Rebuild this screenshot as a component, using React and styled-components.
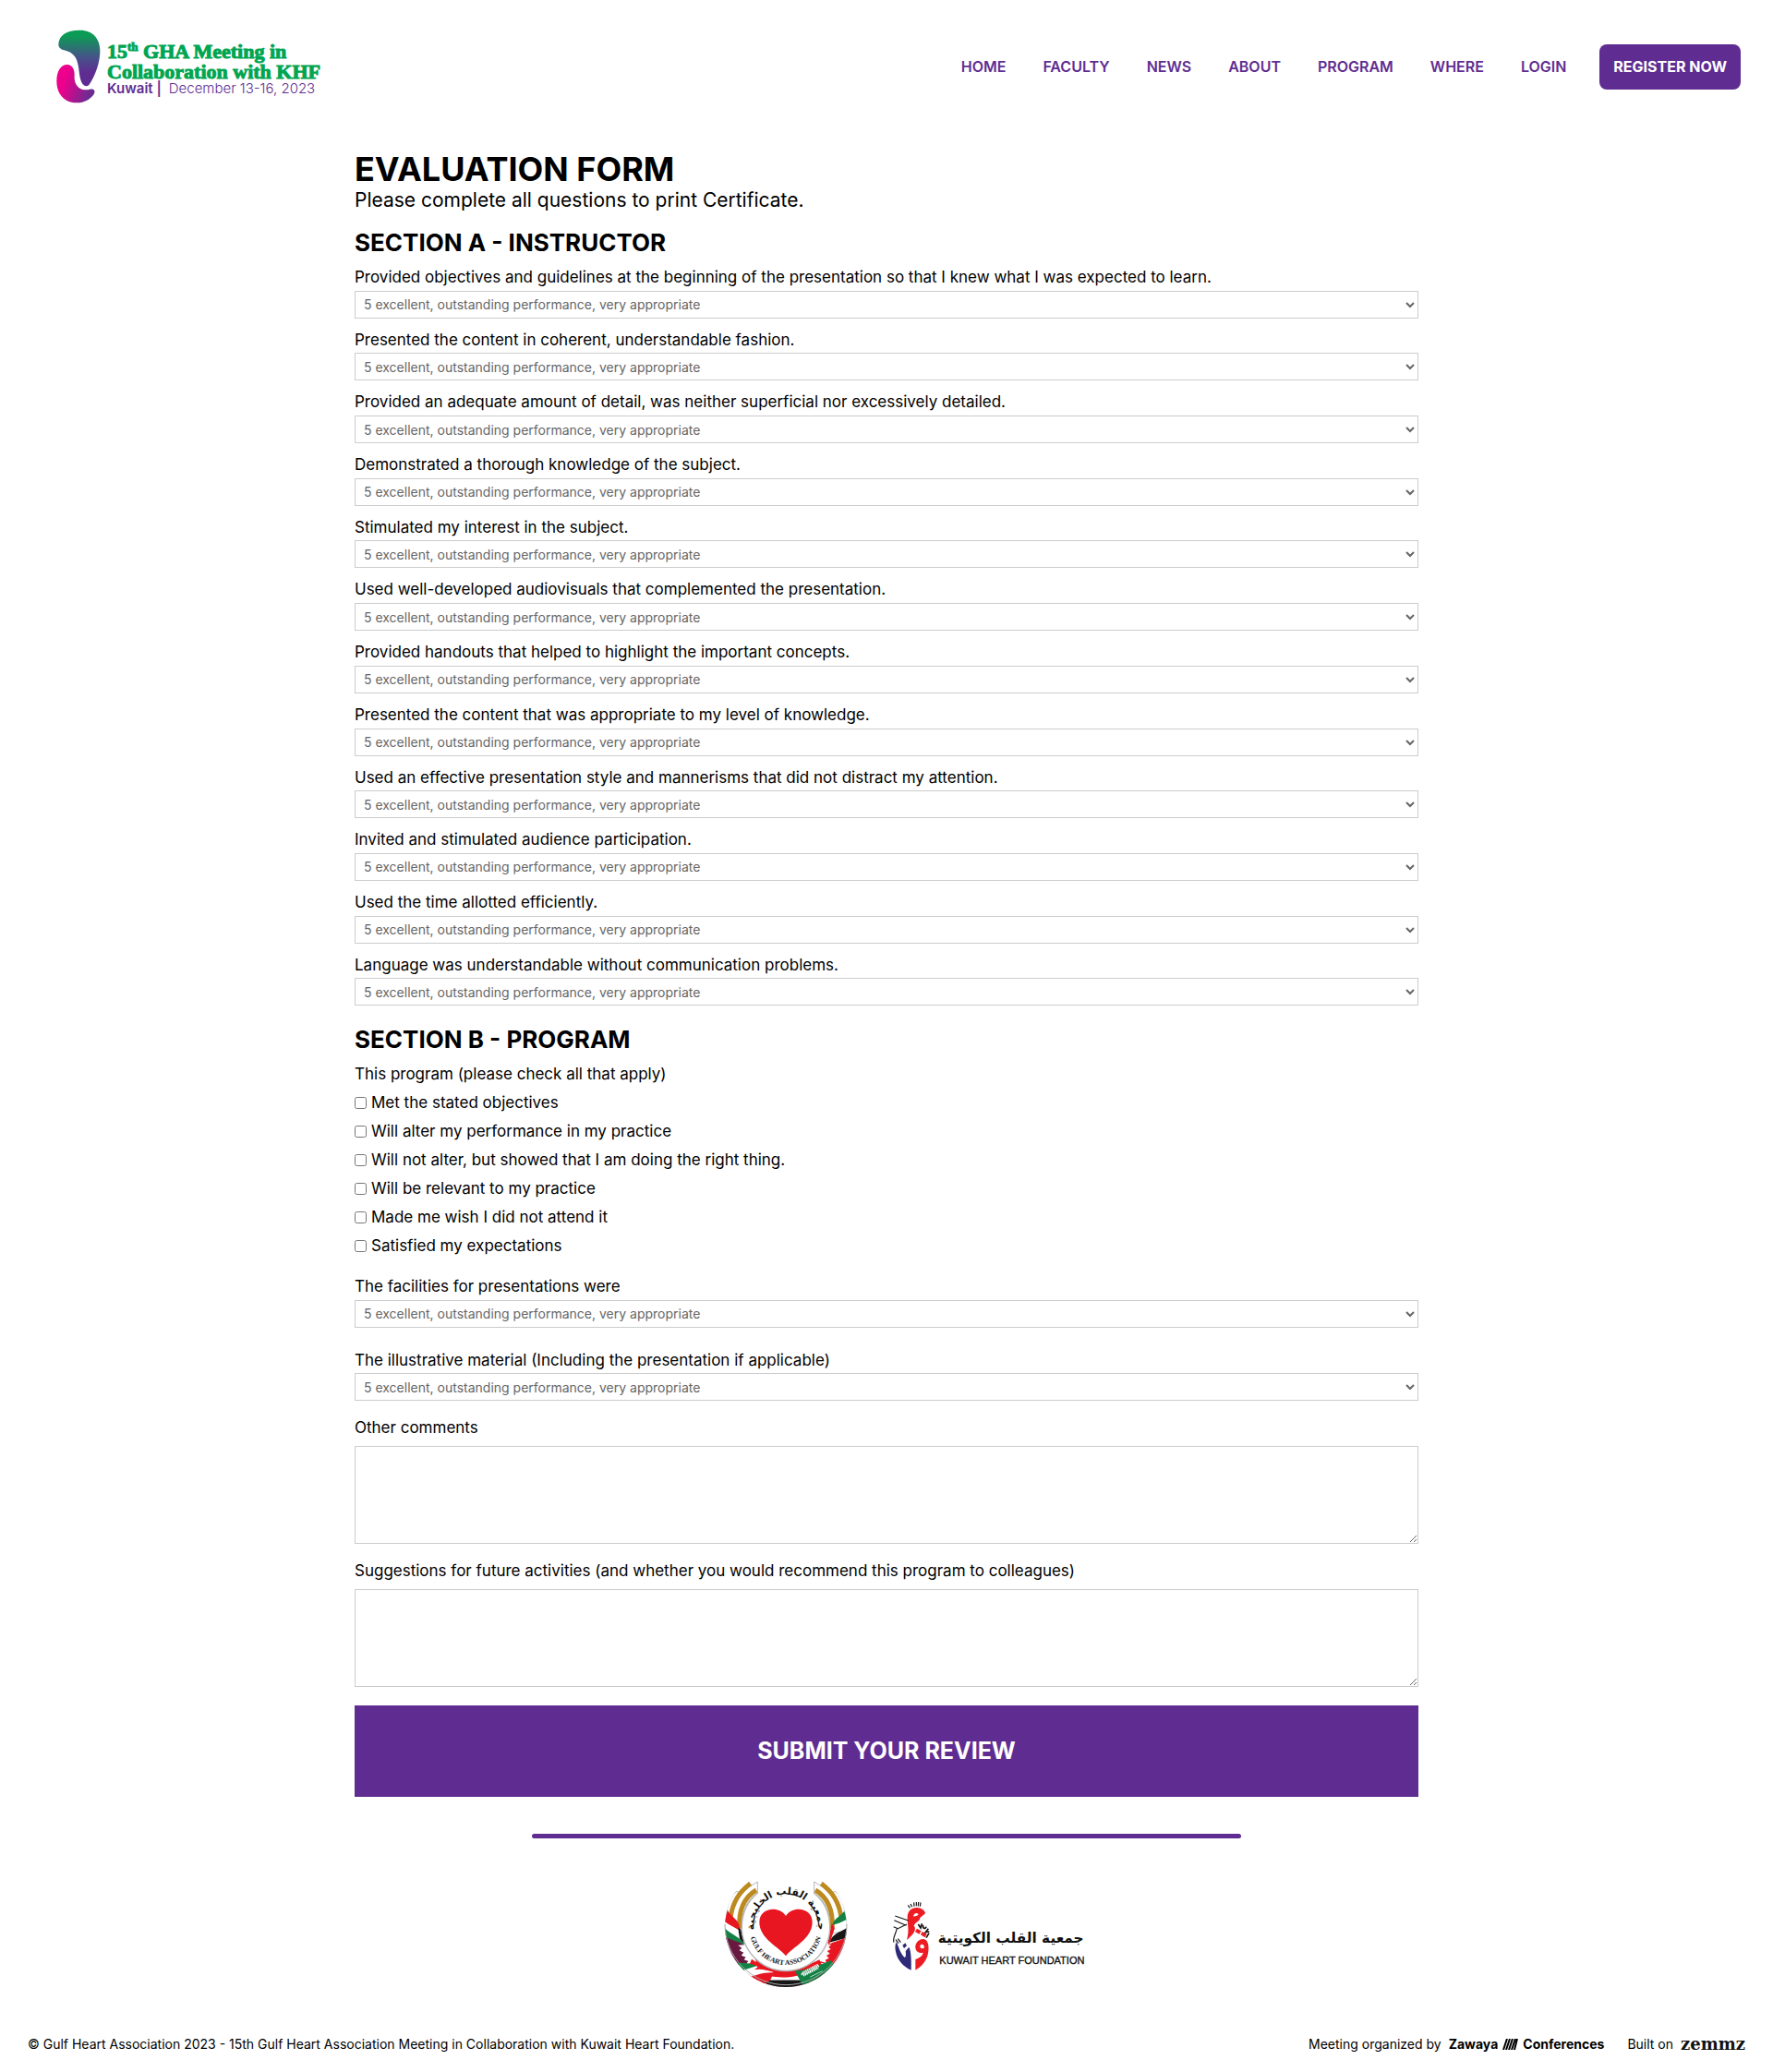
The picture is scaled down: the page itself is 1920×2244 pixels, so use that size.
import React from "react";
import styled, { createGlobalStyle } from "styled-components";

const PURPLE = "#5f2d91";

const GlobalStyle = createGlobalStyle`
  *, *::before, *::after { box-sizing: border-box; }
  body {
    margin: 0;
    background: #fff;
    color: #000;
    font-family: Inter, "Open Sans", sans-serif;
    font-size: 17px;
    line-height: 1.1;
  }
`;

const Header = styled.header`
  display: flex;
  align-items: center;
  justify-content: space-between;
  padding: 32px 35px 32px 60px;
`;

const Brand = styled.a`
  display: flex;
  align-items: center;
  gap: 6px;
  text-decoration: none;
`;

const BrandText = styled.span`
  display: flex;
  flex-direction: column;
  padding-top: 4px;
`;

const BrandTitle = styled.span`
  color: #00a551;
  font: 700 22px/22px "Liberation Serif", serif;
  white-space: nowrap;
  -webkit-text-stroke: 1px #00a551;
  sup { font-size: 13px; line-height: 0; }
`;

const BrandDate = styled.span`
  color: ${PURPLE};
  font-size: 15px;
  line-height: 14px;
  font-weight: 300;
  white-space: nowrap;
  b { font-weight: 600; margin-right: 8px; }
`;

const Nav = styled.nav`
  display: flex;
  align-items: center;
  gap: 40px;
`;

const NavLink = styled.a`
  color: ${PURPLE};
  font-size: 16px;
  line-height: 19px;
  font-weight: 600;
  text-decoration: none;
`;

const RegisterLink = styled(NavLink)`
  margin-left: -4px;
  padding: 15px;
  border-radius: 8px;
  background: ${PURPLE};
  color: #fff;
  font-weight: 700;
`;

const Main = styled.main`
  width: 60%;
  margin: 0 auto;
  padding-top: 17px;
`;

const Title = styled.h1`
  margin: 0;
  font-size: 36px;
  line-height: 44px;
  font-weight: 700;
`;

const Intro = styled.p`
  margin: 0 0 20px;
  font-size: 21px;
  line-height: 24px;
`;

const SectionTitle = styled.h2`
  margin: 0 0 14px;
  font-size: 26px;
  line-height: 28px;
  font-weight: 700;
`;

const Field = styled.div`
  display: flex;
  flex-direction: column;
  gap: ${(p) => p.$gap ?? 5}px;
  margin-bottom: ${(p) => p.$space ?? 14}px;
`;

const Select = styled.select`
  width: 100%;
  height: 30px;
  padding: 0 5px;
  border: 1px solid #ccc;
  border-radius: 0;
  background: #fff;
  color: #666;
  font: inherit;
  font-size: 14px;
`;

const TextArea = styled.textarea`
  display: block;
  width: 100%;
  height: 106px;
  padding: 8px;
  border: 1px solid #ccc;
  background: #fff;
  color: #666;
  font: inherit;
  font-size: 14px;
  resize: both;
`;

const Checks = styled.fieldset`
  display: flex;
  flex-direction: column;
  gap: 12px;
  margin: 0 0 25px;
  padding: 0;
  border: 0;
`;

const Legend = styled.legend`
  margin-bottom: 12px;
  padding: 0;
`;

const Check = styled.label`
  display: flex;
  align-items: center;
  gap: 5px;
  line-height: 19px;
  input { width: 13px; height: 13px; margin: 0; }
`;

const Submit = styled.button`
  width: 100%;
  padding: 35px;
  border: 0;
  background: ${PURPLE};
  color: #fff;
  font: inherit;
  font-size: 25px;
  line-height: 29px;
  font-weight: 700;
`;

const Divider = styled.hr`
  width: 40%;
  height: 5px;
  margin: 40px auto 45px;
  border: 0;
  border-radius: 3px;
  background: ${PURPLE};
`;

const Partners = styled.div`
  display: flex;
  align-items: center;
  justify-content: center;
  gap: 48px;
  padding-left: 40px;
`;

const Footer = styled.footer`
  display: flex;
  justify-content: space-between;
  align-items: center;
  padding: 50px 30px 20px;
  font-size: 14px;
  line-height: 20px;
`;

const Credits = styled.div`
  display: flex;
  gap: 25px;
`;

const Credit = styled.span`
  display: flex;
  align-items: center;
  gap: 8px;
`;

const Organizer = styled.a`
  display: flex;
  align-items: center;
  gap: 5px;
  color: #000;
  font-weight: 700;
  text-decoration: none;
`;

const Builder = styled.a`
  color: #111;
  font: 700 18px/20px "DejaVu Serif", serif;
  text-decoration: none;
`;

const NAV = ["HOME", "FACULTY", "NEWS", "ABOUT", "PROGRAM", "WHERE", "LOGIN"];

const QUESTIONS = [
  "Provided objectives and guidelines at the beginning of the presentation so that I knew what I was expected to learn.",
  "Presented the content in coherent, understandable fashion.",
  "Provided an adequate amount of detail, was neither superficial nor excessively detailed.",
  "Demonstrated a thorough knowledge of the subject.",
  "Stimulated my interest in the subject.",
  "Used well-developed audiovisuals that complemented the presentation.",
  "Provided handouts that helped to highlight the important concepts.",
  "Presented the content that was appropriate to my level of knowledge.",
  "Used an effective presentation style and mannerisms that did not distract my attention.",
  "Invited and stimulated audience participation.",
  "Used the time allotted efficiently.",
  "Language was understandable without communication problems.",
];

const OUTCOMES = [
  "Met the stated objectives",
  "Will alter my performance in my practice",
  "Will not alter, but showed that I am doing the right thing.",
  "Will be relevant to my practice",
  "Made me wish I did not attend it",
  "Satisfied my expectations",
];

function Rating({ id, label, space }) {
  return (
    <Field $space={space}>
      <label htmlFor={id}>{label}</label>
      <Select id={id} defaultValue="5">
        <option value="5">5 excellent, outstanding performance, very appropriate</option>
      </Select>
    </Field>
  );
}

function Comment({ id, label, space }) {
  return (
    <Field $gap={10} $space={space}>
      <label htmlFor={id}>{label}</label>
      <TextArea id={id} />
    </Field>
  );
}

function BrandMark() {
  return (
    <svg width="50" height="80" viewBox="64 36 146 240" aria-hidden="true">
      <defs>
        <linearGradient id="stomach" x1="0" y1="0" x2="0" y2="1">
          <stop offset="0.1" stopColor="#0c9b55" />
          <stop offset="0.5" stopColor="#47508a" />
          <stop offset="0.75" stopColor="#5f2d91" />
        </linearGradient>
        <linearGradient id="drop" x1="0" y1="0.4" x2="1" y2="0.75">
          <stop offset="0.2" stopColor="#ec008c" />
          <stop offset="0.9" stopColor="#6a2c91" />
        </linearGradient>
      </defs>
      <path
        fill="url(#stomach)"
        d="M72 84C73 55 98 38 140 38C184 37 206 66 207 102C208 143 191 187 171 216C165 222 157 221 151 214C138 196 141 170 134 144C127 116 109 108 90 103C79 100 72 94 72 84Z"
      />
      <path
        fill="url(#drop)"
        d="M66 203C66 169 81 149 101 150C117 151 125 165 124 186C122 211 135 229 157 232C172 233 181 226 188 233C193 241 184 254 170 263C149 276 121 278 98 266C77 254 66 231 66 203Z"
      />
    </svg>
  );
}

function GulfHeartLogo() {
  return (
    <svg width="134" height="118" viewBox="40 47 402 354" role="img" aria-label="Gulf Heart Association">
      <defs>
        <path id="arcTop" d="M143 233A104 104 0 1 1 339 233" />
        <path id="arcBottom" d="M123 205A118 118 0 0 0 359 205" />
        <clipPath id="ring"><circle cx="241" cy="197" r="198" /></clipPath>
      </defs>
      <g clipPath="url(#ring)">
        <path fill="#fff" stroke="#b5b5b5" strokeWidth="3" d="M44 215C43 150 55 110 80 84L90 88L121 54L128 66L149 53V90C112 112 94 155 97 220Z" />
        <path fill="none" stroke="#bd8a20" strokeWidth="15" d="M62 165C68 122 86 88 126 59" />
        <path fill="none" stroke="#bd8a20" strokeWidth="15" d="M90 205C87 145 106 103 145 80" />
        <path fill="#fff" stroke="#b5b5b5" strokeWidth="3" d="M438 215C439 150 427 110 402 84L392 88L361 54L354 66L333 53V90C370 112 388 155 385 220Z" />
        <path fill="none" stroke="#bd8a20" strokeWidth="15" d="M420 165C414 122 396 88 356 59" />
        <path fill="none" stroke="#bd8a20" strokeWidth="15" d="M392 205C395 145 376 103 337 80" />
        <path fill="#e81621" d="M51 145C67 168 82 174 88 190L94 213L42 184Z" />
        <path fill="#fff" d="M42 181C66 205 83 201 101 244L42 218Z" />
        <path fill="#171717" d="M86 202L94 207L106 256L91 239Z" />
        <path fill="#138044" d="M42 203C66 228 88 227 107 258L43 240Z" />
        <path fill="#69183f" d="M43 231C65 245 88 246 105 258L133 322L75 323Z" />
        <path fill="#fff" d="M86 259L107 258L137 318L112 320L119 311L105 306L111 298L96 292L104 283L90 276L98 268Z" />
        <path fill="#138044" d="M431 148C414 167 397 174 391 194L439 180Z" />
        <path fill="#fff" d="M438 175C412 190 399 191 386 220L439 208Z" />
        <path fill="#171717" d="M440 202C415 218 394 219 382 250L440 235Z" />
        <path fill="#e81621" d="M390 188L400 203L382 257L377 252Z" />
        <path fill="#e81621" d="M440 232C416 247 394 246 377 260L346 316L405 321C430 294 440 263 440 232Z" />
        <path fill="#fff" d="M389 256L376 259L348 310L374 317L369 307L381 301L373 293L384 286L375 278L387 272L380 265Z" />
        <path fill="#e81621" d="M130 304C200 355 270 348 350 306L390 400H90Z" />
        <path fill="#fff" d="M133 342C210 376 270 363 310 349L330 400H150Z" />
        <path fill="#171717" d="M155 371C220 374 260 371 305 373L340 389L280 402H180Z" />
        <path fill="#138044" d="M75 318C99 314 127 316 150 329L100 348Z" />
        <path fill="#fff" d="M103 340L145 327L151 329L112 360Z" />
        <path fill="#fff" d="M100 346C135 338 165 332 201 346L190 372L124 366Z" />
        <path fill="#e81621" d="M141 303L206 347L151 334Z" />
        <path fill="#e81621" d="M120 364C145 356 169 346 202 348L190 373L165 390Z" />
        <path fill="#138044" d="M269 341C305 345 353 321 389 308L402 333L371 369L330 392L300 396Z" />
        <path fill="none" stroke="#fff" strokeWidth="6" strokeDasharray="4 2" d="M291 354C312 351 331 334 350 326M294 349L345 322M298 358L347 333" />
        <path stroke="#fff" strokeWidth="2" d="M320 362L360 343" />
      </g>
      <path fill="none" stroke="#a9a9a9" strokeWidth="3" d="M43 190A198 198 0 1 0 439 190" />
      <path fill="#fff" stroke="#b5b5b5" strokeWidth="4" d="M149 90A143 143 0 1 0 333 90Z" />
      <path fill="#fff" d="M151 50H331V96H151Z" />
      <path fill="#e81621" d="M241 294C221 265 155 239 155 184C155 136 219 129 241 164C263 129 327 136 327 184C327 239 261 265 241 294Z" />
      <text direction="rtl" fill="#111" fontFamily="DejaVu Sans" fontSize="33" fontWeight="700" textAnchor="middle">
        <textPath href="#arcTop" startOffset="50%">جمعية القلب الخليجية</textPath>
      </text>
      <text fill="#111" fontFamily="Liberation Serif" fontSize="23" fontWeight="700" textAnchor="middle">
        <textPath href="#arcBottom" startOffset="50%">GULF HEART ASSOCIATION</textPath>
      </text>
    </svg>
  );
}

function KuwaitHeartLogo() {
  return (
    <svg width="210" height="80" viewBox="48 50 630 240" role="img" aria-label="Kuwait Heart Foundation">
      <path fill="#ed1c24" fillRule="evenodd" d="M97 183C105 155 97 135 98 113C99 91 116 80 135 84C147 86 156 95 156 102L139 116C139 127 122 131 119 142C127 150 121 162 115 169C109 176 102 181 97 188ZM117 111C123 112 131 110 134 105C129 98 119 101 117 111Z" />
      <path fill="#ed1c24" d="M129 151L143 159L136 169L123 161ZM146 161L161 168L155 180L141 171Z" />
      <path fill="#ed1c24" fillRule="evenodd" d="M124 207C128 190 145 180 158 188C169 197 169 226 161 246C152 265 138 279 124 286V251C137 246 147 240 149 229C135 234 122 224 124 207ZM139 207C137 216 148 219 153 213C153 202 143 198 139 207Z" />
      <path fill="#2e2a78" fillRule="evenodd" d="M62 195C69 208 75 233 88 244C94 246 93 235 92 224L103 211C110 223 111 255 110 286C85 275 65 253 60 226C57 212 58 203 62 195ZM82 205L91 198L96 207L87 215Z" />
      <g fill="none" stroke="#151515" strokeWidth="3.5">
        <path d="M58 110L101 125M55 124L94 141M96 137L67 151L53 145M64 151C59 171 49 182 54 196M60 187L69 199M67 184L76 196" />
        <path d="M100 75L106 84M108 71L113 81M119 66L120 79M127 65L127 78M134 65L133 78M141 66L139 79" />
        <path strokeWidth="5" d="M133 137L141 149L145 135M149 139C146 154 158 152 159 145M166 151L157 163L169 161M168 166L159 181" />
      </g>
      <text x="671" y="198" textAnchor="start" direction="rtl" fill="#111" fontFamily="DejaVu Sans" fontSize="46" fontWeight="700">جمعية القلب الكويتية</text>
      <text x="202" y="265" fill="#111" stroke="#111" strokeWidth="1" fontFamily="Liberation Sans" fontSize="33">KUWAIT HEART FOUNDATION</text>
    </svg>
  );
}

export default function App() {
  return (
    <>
      <GlobalStyle />
      <Header>
        <Brand href="#home">
          <BrandMark />
          <BrandText>
            <BrandTitle>15<sup>th</sup> GHA Meeting in</BrandTitle>
            <BrandTitle>Collaboration with KHF</BrandTitle>
            <BrandDate><b>Kuwait |</b>December 13-16, 2023</BrandDate>
          </BrandText>
        </Brand>
        <Nav>
          {NAV.map((item) => (
            <NavLink key={item} href={`#${item.toLowerCase()}`}>{item}</NavLink>
          ))}
          <RegisterLink href="#register">REGISTER NOW</RegisterLink>
        </Nav>
      </Header>
      <Main>
        <Title>EVALUATION FORM</Title>
        <Intro>Please complete all questions to print Certificate.</Intro>
        <form>
          <SectionTitle>SECTION A - INSTRUCTOR</SectionTitle>
          {QUESTIONS.map((q, i) => (
            <Rating key={q} id={`q${i}`} label={q} space={i === QUESTIONS.length - 1 ? 23 : 14} />
          ))}
          <SectionTitle>SECTION B - PROGRAM</SectionTitle>
          <Checks>
            <Legend>This program (please check all that apply)</Legend>
            {OUTCOMES.map((o) => (
              <Check key={o}><input type="checkbox" />{o}</Check>
            ))}
          </Checks>
          <Rating id="facilities" label="The facilities for presentations were" space={26} />
          <Rating id="material" label="The illustrative material (Including the presentation if applicable)" space={20} />
          <Comment id="comments" label="Other comments" space={20} />
          <Comment id="suggestions" label="Suggestions for future activities (and whether you would recommend this program to colleagues)" space={20} />
          <Submit type="button">SUBMIT YOUR REVIEW</Submit>
        </form>
      </Main>
      <Divider />
      <Partners>
        <GulfHeartLogo />
        <KuwaitHeartLogo />
      </Partners>
      <Footer>
        <span>© Gulf Heart Association 2023 - 15th Gulf Heart Association Meeting in Collaboration with Kuwait Heart Foundation.</span>
        <Credits>
          <Credit>
            Meeting organized by
            <Organizer href="#zawaya">
              Zawaya
              <svg width="17" height="12" viewBox="0 0 17 12" aria-hidden="true">
                <path stroke="#000" strokeWidth="2" d="M1 12L5 0M4 12L8 0M7 12L11 0M10 12L14 0M13 12L16 0" />
              </svg>
              Conferences
            </Organizer>
          </Credit>
          <Credit>
            Built on
            <Builder href="#zemmz">zemmz</Builder>
          </Credit>
        </Credits>
      </Footer>
    </>
  );
}
